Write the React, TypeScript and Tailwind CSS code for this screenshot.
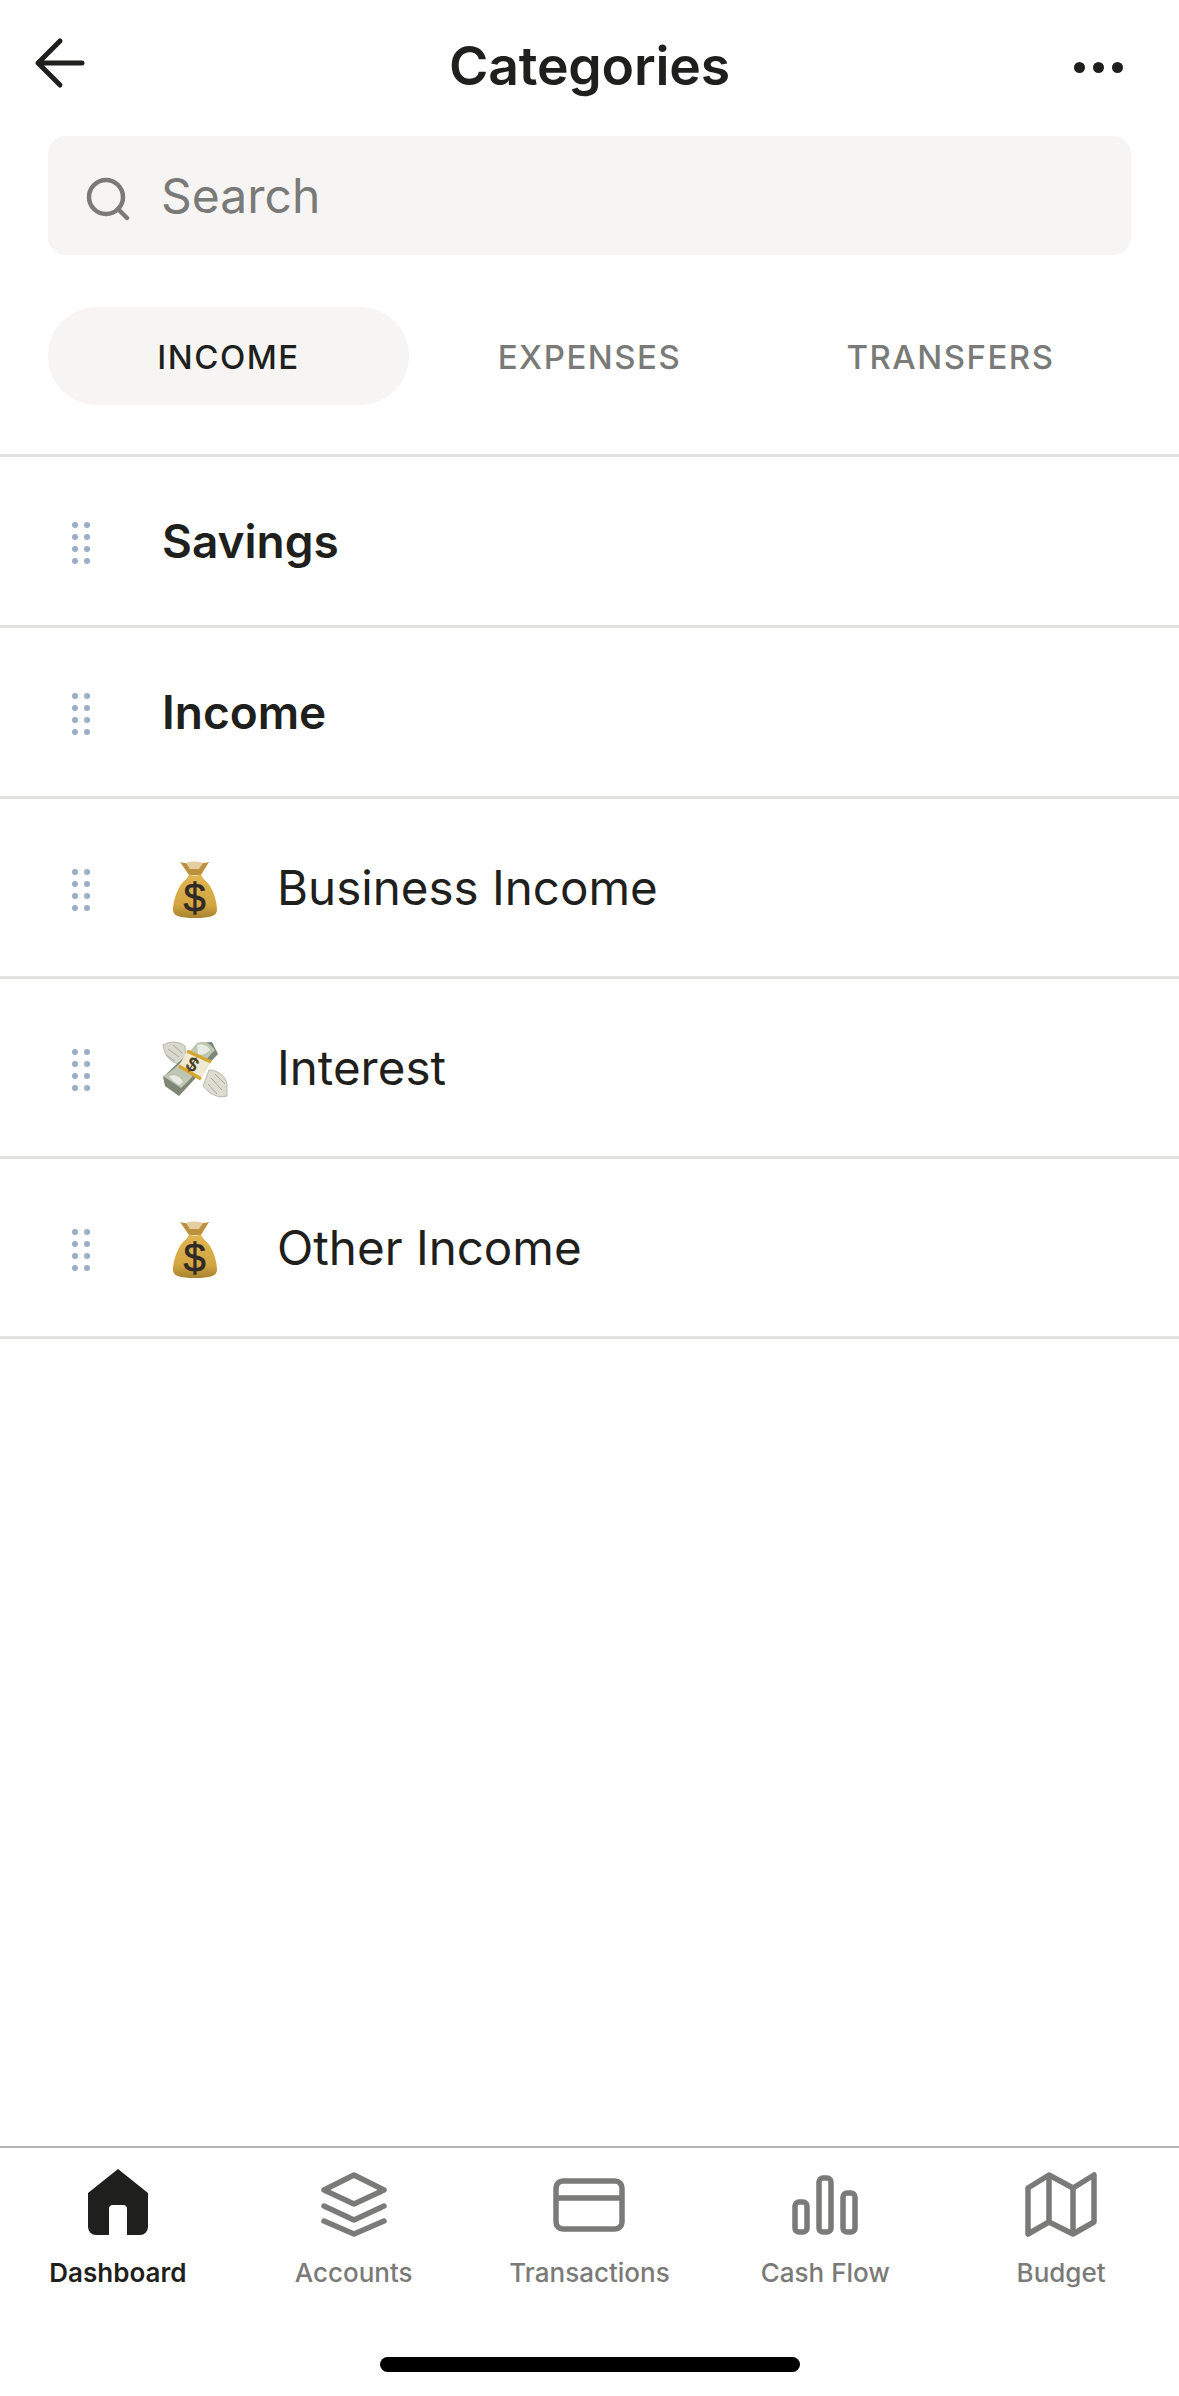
const rows = [
  { name: 'Savings', group: true },
  { name: 'Income', group: true },
  { name: 'Business Income', emoji: 'bag' },
  { name: 'Interest', emoji: 'wings' },
  { name: 'Other Income', emoji: 'bag' },
];

function DragHandle() {
  return (
    <svg width="24" height="42" viewBox="0 0 24 42" className="mt-[4px] shrink-0">
      {[3, 15, 27, 39].map((y) => (
        <g key={y} fill="#9cadc9">
          <circle cx="6" cy={y} r="3" />
          <circle cx="18" cy={y} r="3" />
        </g>
      ))}
    </svg>
  );
}

function MoneyBag({ id }: { id: string }) {
  return (
    <svg width="80" height="80" viewBox="0 0 80 80">
      <defs>
        <linearGradient id={id} x1="0" y1="0" x2="0" y2="1">
          <stop offset="0" stopColor="#e0b653" />
          <stop offset="0.7" stopColor="#d2a540" />
          <stop offset="1" stopColor="#a9822f" />
        </linearGradient>
      </defs>
      <path d="M25 12 C32 14 46 14 54 12 L46 25 L34 25 Z" fill="#bd9040" />
      <path d="M31 13 C35 11 44 11 48 13 L44 19 L35 19 Z" fill="#e3cf9f" />
      <path
        d="M34 24 C37 26 43 26 46 24 C47 29 52 31 55 36 C59 43 62 52 62 60 C62 66 55 68 40 68 C25 68 18 66 18 60 C18 52 21 43 25 36 C28 31 33 29 34 24 Z"
        fill={`url(#${id})`}
      />
      <text x="39.5" y="62" textAnchor="middle" fontSize="40" fontWeight="400" fill="#2f2a26" stroke="#2f2a26" strokeWidth="0.6" fontFamily="'Liberation Sans', sans-serif">
        $
      </text>
    </svg>
  );
}

function FlyingMoney() {
  return (
    <svg width="80" height="80" viewBox="0 0 80 80">
      {/* wings */}
      <path d="M8 15 C15 11 24 11 30 16 L31 31 L24 34 C15 32 9 25 8 15 Z" fill="#d8d8cd" stroke="#a9a99d" strokeWidth="0.8" />
      <path d="M13 19 L24 27 M18 15 L27 23 M11 25 L20 31" stroke="#a9a99d" strokeWidth="1" />
      <path d="M72 66 C62 69 54 63 48 56 L54 40 C62 40 70 45 72 54 Z" fill="#dcdcd1" stroke="#a9a99d" strokeWidth="0.8" />
      <path d="M56 48 L67 60 M60 44 L70 54 M53 54 L62 64" stroke="#a9a99d" strokeWidth="1" />
      {/* stack */}
      <path d="M8 47 L44 13 L57 12 L63 24 L24 66 L10 56 Z" fill="#7e8678" />
      <path d="M8 46 C24 38 32 24 42 13 C48 11 54 12 60 20 C50 30 38 48 26 58 C20 54 14 50 8 46 Z" fill="#bcc6b2" />
      <path d="M42 15 C47 13 52 15 55 20 C51 24 47 26 43 24 Z" fill="#e7ece1" />
      <path d="M14 46 C20 44 25 46 28 52 L24 55 C20 52 16 50 14 46 Z" fill="#e7ece1" />
      {/* band */}
      <path d="M32 21 L56 32 L46 49 L24 36 Z" fill="#efe9d3" />
      <path d="M32 21 L56 32 M24 36 L46 49" stroke="#d7a62f" strokeWidth="3.2" />
      <text x="37" y="41" textAnchor="middle" fontSize="20" fontWeight="700" fill="#4a4228" fontFamily="'Liberation Sans', sans-serif" transform="rotate(30 37 35)">
        $
      </text>
    </svg>
  );
}

function HomeIcon() {
  return (
    <svg width="80" height="70" viewBox="0 0 80 70">
      <path
        d="M40 0 L70 24 V58 A8 8 0 0 1 62 66 H49 V40 A4 4 0 0 0 45 36 H35 A4 4 0 0 0 31 40 V66 H18 A8 8 0 0 1 10 58 V24 Z"
        fill="#1f1f1d"
      />
    </svg>
  );
}

function LayersIcon() {
  return (
    <svg width="80" height="70" viewBox="0 0 80 70" fill="none" stroke="#7a7a78" strokeWidth="5.5" strokeLinecap="round" strokeLinejoin="round">
      <path d="M40 6 L70 21 L40 35 L10 21 Z" />
      <path d="M10 37 L40 51 L70 37" />
      <path d="M10 52 L40 65 L70 52" />
    </svg>
  );
}

function CardIcon() {
  return (
    <svg width="80" height="70" viewBox="0 0 80 70" fill="none" stroke="#7a7a78" strokeWidth="5.5">
      <rect x="7" y="12" width="66" height="48" rx="7" />
      <path d="M7 29 H73" />
    </svg>
  );
}

function BarsIcon() {
  return (
    <svg width="80" height="70" viewBox="0 0 80 70" fill="none" stroke="#7a7a78" strokeWidth="5.5">
      <rect x="10" y="33" width="12" height="30" rx="4" />
      <rect x="34" y="9" width="12" height="54" rx="4" />
      <rect x="58" y="24" width="12" height="39" rx="4" />
    </svg>
  );
}

function MapIcon() {
  return (
    <svg width="80" height="70" viewBox="0 0 80 70" fill="none" stroke="#7a7a78" strokeWidth="5.5" strokeLinejoin="round">
      <path d="M7 19 L28 6 L52 19 L73 6 V53 L52 65 L28 53 L7 65 Z" />
      <path d="M28 6 V53 M52 19 V65" />
    </svg>
  );
}

const tabs = [
  { label: 'Dashboard', icon: <HomeIcon />, active: true },
  { label: 'Accounts', icon: <LayersIcon /> },
  { label: 'Transactions', icon: <CardIcon /> },
  { label: 'Cash Flow', icon: <BarsIcon /> },
  { label: 'Budget', icon: <MapIcon /> },
];

export default function App() {
  return (
    <div className="flex h-[2396px] w-[1179px] flex-col overflow-hidden bg-white font-['Inter',sans-serif] text-[#1f1f1d]">
      {/* Header */}
      <header className="grid h-[136px] shrink-0 grid-cols-[1fr_auto_1fr] items-center px-[34px] pb-[4px]">
        <svg width="52" height="52" viewBox="0 0 52 52" fill="none" stroke="#1f1f1d" strokeWidth="5" strokeLinecap="round" strokeLinejoin="round" className="mb-[6px]">
          <path d="M26 4 L4 26 L26 48 M5 26 H48" />
        </svg>
        <h1 className="text-[53.5px] font-semibold leading-none tracking-[-0.2px]">Categories</h1>
        <div className="mt-[2px] flex justify-end gap-[8px] pr-[22px]">
          <span className="size-[11px] rounded-full bg-[#1f1f1d]" />
          <span className="size-[11px] rounded-full bg-[#1f1f1d]" />
          <span className="size-[11px] rounded-full bg-[#1f1f1d]" />
        </div>
      </header>

      {/* Search */}
      <div className="mx-[48px] flex h-[119px] shrink-0 items-center gap-[31px] rounded-[18px] bg-[#f6f5f3] pl-[38px]">
        <svg width="44" height="44" viewBox="0 0 44 44" fill="none" stroke="#7a7a78" strokeWidth="4.5" strokeLinecap="round" className="mt-[6px]">
          <circle cx="20" cy="20" r="17" />
          <path d="M32 32 L41 41" />
        </svg>
        <span className="text-[48px] leading-none text-[#7a7a78]">Search</span>
      </div>

      {/* Tabs */}
      <div className="mx-[48px] mt-[52px] grid h-[98px] shrink-0 grid-cols-3 text-[33px] font-medium tracking-[1.5px]">
        <div className="flex items-center justify-center rounded-full bg-[#f6f5f3] pt-[3px]">INCOME</div>
        <div className="flex items-center justify-center pt-[3px] text-[#7a7a78]">EXPENSES</div>
        <div className="flex items-center justify-center pt-[3px] text-[#7a7a78]">TRANSFERS</div>
      </div>

      {/* Category list */}
      <ul className="mt-[49px] border-t-[3px] border-[#e2e2e0]">
        {rows.map((row, i) => (
          <li
            key={row.name}
            className={
              row.group
                ? 'flex h-[171px] items-center border-b-[3px] border-[#e2e2e0] pl-[69px]'
                : 'flex h-[180px] items-center border-b-[3px] border-[#e2e2e0] pl-[69px]'
            }
          >
            <DragHandle />
            {row.group ? (
              <span className="ml-[69px] text-[46px] font-semibold leading-none">{row.name}</span>
            ) : (
              <>
                <span className="ml-[62px] mt-[4px] flex w-[80px] justify-center">
                  {row.emoji === 'bag' ? <MoneyBag id={`bag${i}`} /> : <FlyingMoney />}
                </span>
                <span className="ml-[42px] text-[47.5px] leading-none">{row.name}</span>
              </>
            )}
          </li>
        ))}
      </ul>

      {/* Tab bar */}
      <nav className="mt-auto flex h-[250px] shrink-0 flex-col border-t-[2px] border-[#b5b5b5]">
        <div className="grid grid-cols-5 pt-[21px]">
          {tabs.map((tab) => (
            <div key={tab.label} className="flex flex-col items-center">
              {tab.icon}
              <span
                className={
                  tab.active
                    ? 'mt-[21px] text-[26px] font-semibold leading-none text-[#1f1f1d]'
                    : 'mt-[21px] text-[26px] font-medium leading-none text-[#7a7a78]'
                }
              >
                {tab.label}
              </span>
            </div>
          ))}
        </div>
        <div className="mx-auto mt-[71px] h-[15px] w-[420px] rounded-full bg-black" />
      </nav>
    </div>
  );
}
